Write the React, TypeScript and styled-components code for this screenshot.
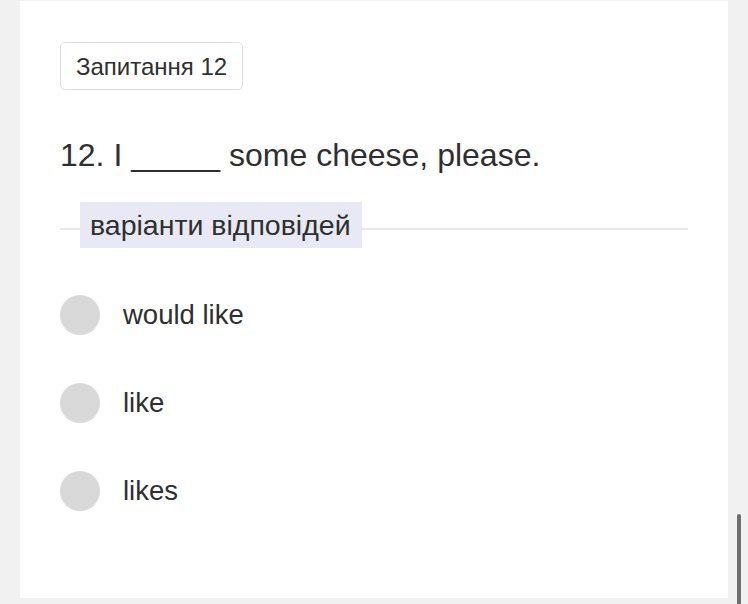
import styled, { createGlobalStyle } from "styled-components";

const GlobalStyle = createGlobalStyle`
  html, body {
    margin: 0;
    padding: 0;
    background: #f1f1f1;
    overflow: hidden;
  }

  body {
    font-family: "Liberation Sans", Arial, sans-serif;
    color: #2f2f2f;
  }
`;

const Page = styled.div`
  position: relative;
  height: 604px;
  padding: 1px 20px 0;
  box-sizing: border-box;
`;

const Card = styled.main`
  background: #ffffff;
  height: 597px;
  padding: 41px 40px 0;
  box-sizing: border-box;
`;

const QuestionBadge = styled.div`
  display: inline-flex;
  align-items: center;
  height: 48px;
  padding: 2px 15px 0;
  box-sizing: border-box;
  border: 1px solid #dedede;
  border-radius: 5px;
  font-size: 24px;
`;

const QuestionText = styled.h1`
  margin: 47px 0 0;
  font-size: 32px;
  font-weight: 400;
  line-height: 37px;
`;

const Divider = styled.div`
  display: flex;
  align-items: center;
  margin-top: 28px;

  &::before,
  &::after {
    content: "";
    height: 2px;
    margin-top: 7px;
    background: #e8e8e8;
  }

  &::before {
    width: 20px;
  }

  &::after {
    flex: 1;
  }
`;

const Legend = styled.span`
  display: flex;
  align-items: center;
  height: 46px;
  padding: 0 11px 0 10px;
  background: #e9e9f6;
  font-size: 28.5px;
`;

const Options = styled.ul`
  list-style: none;
  margin: 47px 0 0;
  padding: 0;
  display: flex;
  flex-direction: column;
  gap: 48px;
`;

const Option = styled.li`
  display: flex;
  align-items: center;
  gap: 23px;
  height: 40px;
  font-size: 27.5px;
`;

const Radio = styled.span`
  width: 40px;
  height: 40px;
  border-radius: 50%;
  background: #d9d9d9;
  flex-shrink: 0;
`;

const ScrollThumb = styled.div`
  position: absolute;
  right: 7px;
  top: 514px;
  width: 4px;
  height: 100px;
  border-radius: 2px;
  background: #6e6e6e;
`;

const answers = ["would like", "like", "likes"];

const App = () => {
  return (
    <>
      <GlobalStyle />
      <Page>
        <Card>
          <QuestionBadge>Запитання 12</QuestionBadge>
          <QuestionText>12. I _____ some cheese, please.</QuestionText>
          <Divider>
            <Legend>варіанти відповідей</Legend>
          </Divider>
          <Options>
            {answers.map((answer) => (
              <Option key={answer}>
                <Radio />
                {answer}
              </Option>
            ))}
          </Options>
        </Card>
        <ScrollThumb />
      </Page>
    </>
  );
};

export default App;
